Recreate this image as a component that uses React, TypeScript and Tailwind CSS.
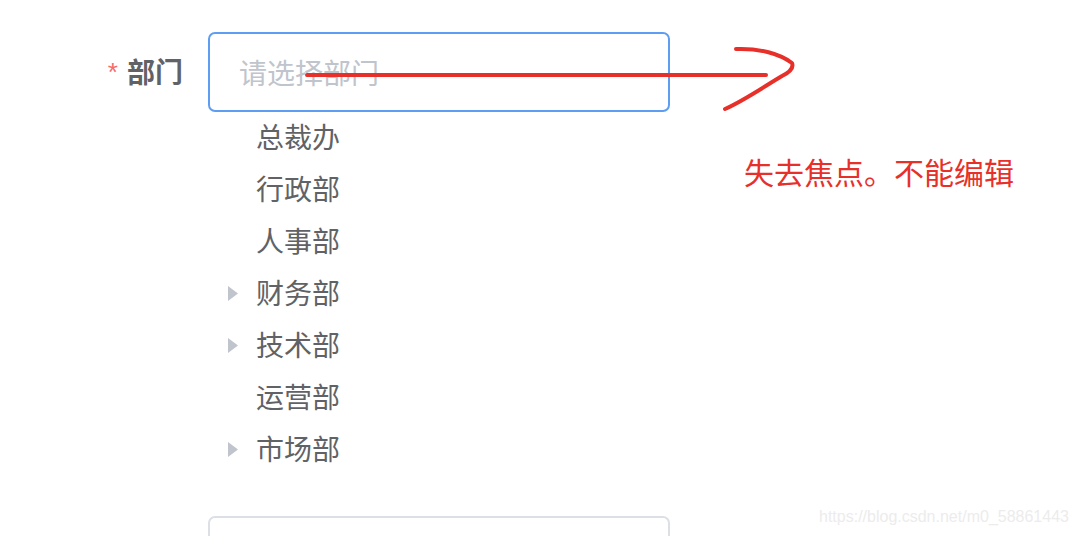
import React from "react";

const items: { label: string; arrow: boolean }[] = [
  { label: "总裁办", arrow: false },
  { label: "行政部", arrow: false },
  { label: "人事部", arrow: false },
  { label: "财务部", arrow: true },
  { label: "技术部", arrow: true },
  { label: "运营部", arrow: false },
  { label: "市场部", arrow: true },
];

export default function App() {
  return (
    <div
      className="relative w-[1076px] h-[536px] overflow-hidden bg-white"
      style={{ fontFamily: '"Noto Sans CJK SC", "Noto Sans", sans-serif' }}
    >
      <div className="flex pt-[32px]">
        <div className="w-[208px] shrink-0 flex items-start justify-end pr-[25px] h-[80px] pt-[20px]">
          <span
            className="text-[#f56c6c] text-[26px] leading-[28px] mr-[9px] mt-[6px]"
            style={{ fontFamily: '"Liberation Sans", Arial, sans-serif' }}
          >
            *
          </span>
          <span className="text-[#606266] text-[28px] leading-[38px] font-bold">部门</span>
        </div>
        <div className="flex flex-col w-[462px]">
          <div className="h-[80px] border-2 border-[#5d9ef3] rounded-[7px] flex items-center pl-[29px]">
            <span className="text-[#c0c4cc] text-[28px] leading-[38px] -mt-[1px]">请选择部门</span>
          </div>
          <div className="flex flex-col -mt-[1px]">
            {items.map((it) => (
              <div key={it.label} className="h-[52px] flex items-center">
                <div className="w-[48px] flex justify-end pr-[18px]">
                  {it.arrow && (
                    <svg width="10" height="15" viewBox="0 0 10 15">
                      <path d="M0 0 L10 7.5 L0 15 Z" fill="#c0c4cc" />
                    </svg>
                  )}
                </div>
                <span className="text-[#606266] text-[28px] leading-[38px] -mt-[2px]">{it.label}</span>
              </div>
            ))}
          </div>
          <div className="mt-[41px] h-[60px] border-2 border-[#dcdfe6] rounded-[7px]" />
        </div>
      </div>

      <svg className="absolute left-0 top-0" width="1076" height="536" viewBox="0 0 1076 536">
        <path
          d="M307 75 L766 75"
          stroke="#e8302a"
          strokeWidth="4"
          strokeLinecap="round"
          fill="none"
        />
        <path
          d="M736 49 C760 48 780 54 792 63 C794 68 790 72 782 76 C765 86 745 100 725 109"
          stroke="#e8302a"
          strokeWidth="4"
          strokeLinecap="round"
          strokeLinejoin="round"
          fill="none"
        />
      </svg>

      <div className="absolute left-[744px] top-[151px] text-[#e8302a] text-[30px] leading-[40px] whitespace-nowrap">
        失去焦点。不能编辑
      </div>

      <div
        className="absolute left-[819px] top-[507px] text-[#ececec] text-[16px] leading-[20px] whitespace-nowrap"
        style={{ fontFamily: '"Liberation Sans", Arial, sans-serif' }}
      >
        https://blog.csdn.net/m0_58861443
      </div>
    </div>
  );
}
